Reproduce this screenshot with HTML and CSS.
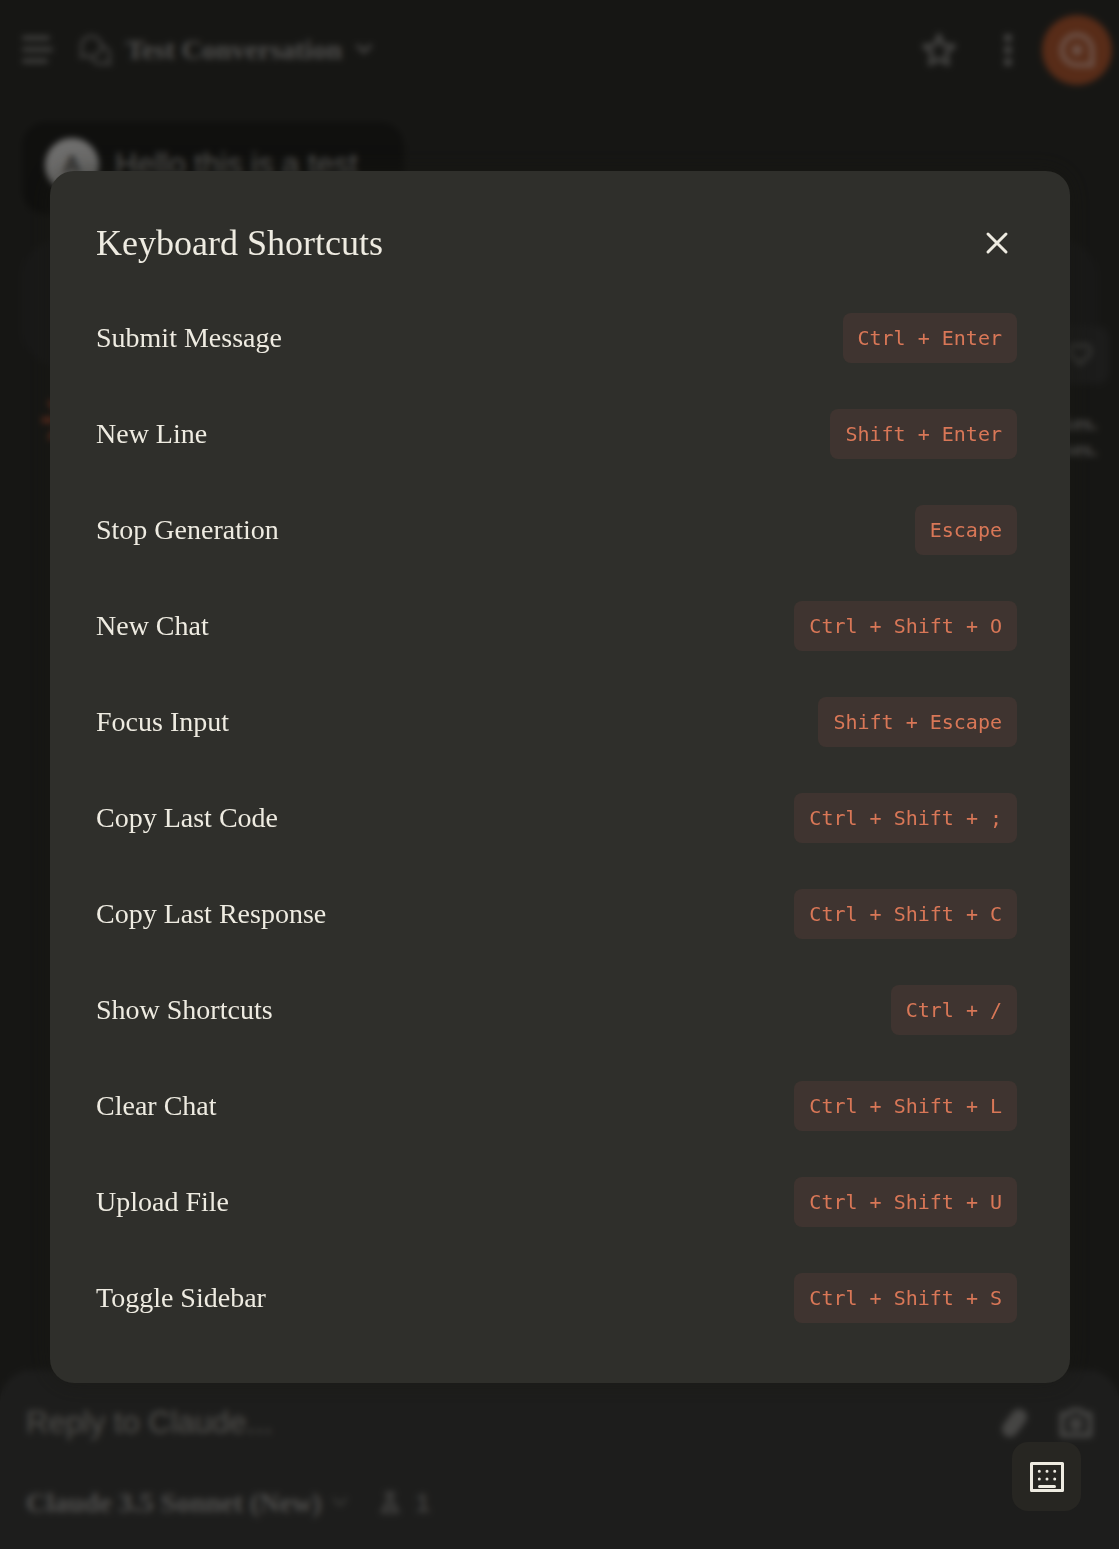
FILE: index.html
```html
<!DOCTYPE html>
<html lang="en">
<head>
<meta charset="utf-8">
<meta name="viewport" content="width=device-width, initial-scale=1">
<title>Test Conversation</title>
<link rel="stylesheet" href="styles.css">
</head>
<body>
<div class="app">
  <header class="topbar">
    <button class="icon-button" type="button" aria-label="Menu">
      <svg width="32" height="32" viewBox="0 0 32 32"><path d="M2 4h24M2 15.500h27M2 27h22" stroke-width="4"/></svg>
    </button>
    <button class="chat-title" type="button">
      <svg width="34" height="34" viewBox="0 0 34 34"><path d="M3 24l1-7a10 10 0 1 1 7 6zM23 13a9 9 0 0 1 8 12l1 6-6-1a10 10 0 0 1-12-4" stroke-width="3"/></svg>
      <span>Test Conversation</span>
      <svg width="16" height="12" viewBox="0 0 16 12"><path d="M2 2l6 6 6-6" stroke-width="4"/></svg>
    </button>
    <div class="topbar-actions">
      <button class="icon-button" type="button" aria-label="Star">
        <svg width="38" height="38" viewBox="0 0 38 38"><path d="M19 4l4 10 11 1-8 7 2 11-9-5-9 5 2-11-8-7 11-1z" stroke-width="4"/></svg>
      </button>
      <button class="icon-button" type="button" aria-label="More">
        <svg class="solid" width="12" height="36" viewBox="0 0 12 36"><circle cx="6" cy="6" r="4"/><circle cx="6" cy="18" r="4"/><circle cx="6" cy="30" r="4"/></svg>
      </button>
      <button class="brand-button" type="button" aria-label="Assistant">
        <svg width="40" height="40" viewBox="0 0 40 40"><path d="M35 35H20a15 15 0 1 1 15-15z" stroke-width="5"/><circle cx="20" cy="20" r="3" stroke-width="5"/></svg>
      </button>
    </div>
  </header>
  <main class="thread">
    <div class="message">
      <span class="avatar">A</span>
      <p>Hello this is a test</p>
    </div>
    <div class="reply">
      <button class="feedback" type="button" aria-label="Like">
        <svg width="24" height="24" viewBox="0 0 24 24"><path d="M12 21L3 12a6 6 0 0 1 9-8 6 6 0 0 1 9 8z" stroke-width="4"/></svg>
      </button>
    </div>
    <div class="thread-foot">
      <svg class="spark" width="52" height="52" viewBox="0 0 52 52"><path d="M26 2v48M2 26h48M9 9l34 34M43 9L9 43" stroke-width="6"/></svg>
      <p>mistakes.<br>responses.</p>
    </div>
  </main>
  <form class="composer">
    <div class="composer-row">
      <input class="prompt" type="text" placeholder="Reply to Claude..." aria-label="Reply to Claude">
      <button class="icon-button" type="button" aria-label="Attach file">
        <svg width="32" height="36" viewBox="0 0 32 36"><path d="M11 24L20 12" stroke-width="16"/></svg>
      </button>
      <button class="icon-button" type="button" aria-label="Take screenshot">
        <svg width="34" height="30" viewBox="0 0 34 30"><path d="M3 6h7l3-4h8l3 4h7v21H3z" stroke-width="5"/><circle cx="17" cy="16" r="4" stroke-width="5"/></svg>
      </button>
    </div>
    <div class="model-row">
      <button class="model" type="button">
        <span>Claude 3.5 Sonnet (New)</span>
        <svg width="16" height="12" viewBox="0 0 16 12"><path d="M2 2l6 6 6-6" stroke-width="3"/></svg>
      </button>
      <button class="style-chip" type="button">
        <svg width="20" height="24" viewBox="0 0 20 24"><path d="M6 2h8M8 2v8L2 21h16L12 10V2M5 16h10" stroke-width="3"/></svg>
        <span>1</span>
      </button>
    </div>
  </form>
</div>

<div class="overlay">
  <section class="modal" role="dialog" aria-modal="true" aria-labelledby="shortcuts-title">
    <header class="modal-head">
      <h2 id="shortcuts-title">Keyboard Shortcuts</h2>
      <button class="close" type="button" aria-label="Close">
        <svg width="24" height="24" viewBox="0 0 24 24"><path d="M3 3l18 18M21 3L3 21" stroke-width="3"/></svg>
      </button>
    </header>
    <dl class="shortcuts">
      <div class="shortcut"><dt>Submit Message</dt><dd><kbd>Ctrl + Enter</kbd></dd></div>
      <div class="shortcut"><dt>New Line</dt><dd><kbd>Shift + Enter</kbd></dd></div>
      <div class="shortcut"><dt>Stop Generation</dt><dd><kbd>Escape</kbd></dd></div>
      <div class="shortcut"><dt>New Chat</dt><dd><kbd>Ctrl + Shift + O</kbd></dd></div>
      <div class="shortcut"><dt>Focus Input</dt><dd><kbd>Shift + Escape</kbd></dd></div>
      <div class="shortcut"><dt>Copy Last Code</dt><dd><kbd>Ctrl + Shift + ;</kbd></dd></div>
      <div class="shortcut"><dt>Copy Last Response</dt><dd><kbd>Ctrl + Shift + C</kbd></dd></div>
      <div class="shortcut"><dt>Show Shortcuts</dt><dd><kbd>Ctrl + /</kbd></dd></div>
      <div class="shortcut"><dt>Clear Chat</dt><dd><kbd>Ctrl + Shift + L</kbd></dd></div>
      <div class="shortcut"><dt>Upload File</dt><dd><kbd>Ctrl + Shift + U</kbd></dd></div>
      <div class="shortcut"><dt>Toggle Sidebar</dt><dd><kbd>Ctrl + Shift + S</kbd></dd></div>
    </dl>
  </section>
</div>

<button class="keyboard-button" type="button" aria-label="Keyboard shortcuts">
  <svg width="34" height="30" viewBox="0 0 34 30">
    <rect x="1.500" y="1.500" width="31" height="27" stroke-width="3"/>
    <path d="M9.500 24.500h15" stroke-width="3"/>
    <path d="M9.300 9.300h.01M17 9.300h.01M24.700 9.300h.01M9.300 17h.01M17 17h.01M24.700 17h.01" stroke-width="3"/>
  </svg>
</button>
</body>
</html>
```

FILE: styles.css
```css
:root {
  --serif: Georgia, "Liberation Serif", serif;
  --sans: "Liberation Sans", sans-serif;
  --mono: Consolas, "DejaVu Sans Mono", monospace;
  --ivory: #eeebe1;
  --muted: #a09f9c;
}

* {
  box-sizing: border-box;
}

body {
  margin: 0;
  background: #2d2d29;
  color: var(--muted);
  font-family: var(--serif);
}

h2, p, dl, dd {
  margin: 0;
}

button {
  display: flex;
  align-items: center;
  padding: 0;
  border: 0;
  background: none;
  color: inherit;
  font: inherit;
}

svg {
  flex: none;
  fill: none;
  stroke: currentColor;
  stroke-linecap: round;
  stroke-linejoin: round;
}

svg.solid {
  fill: currentColor;
  stroke: none;
}

/* Conversation behind the dialog */

.app {
  display: flex;
  flex-direction: column;
  min-height: 100vh;
}

.topbar {
  display: flex;
  align-items: center;
  gap: 24px;
  height: 100px;
  padding: 0 7px 0 22px;
}

.topbar .icon-button {
  color: #8c8b88;
}

.chat-title {
  gap: 14px;
  font-size: 28px;
  font-weight: bold;
}

.chat-title svg {
  color: #7c7b78;
}

.topbar-actions {
  display: flex;
  align-items: center;
  gap: 44px;
  margin-left: auto;
}

.brand-button {
  justify-content: center;
  width: 70px;
  height: 70px;
  margin-left: -16px;
  border-radius: 50%;
  background: #b05830;
  color: #d8a490;
}

.thread {
  flex: 1;
  padding: 22px 22px 0;
}

.message {
  display: flex;
  align-items: center;
  gap: 16px;
  width: fit-content;
  height: 92px;
  padding: 0 46px 6px 23px;
  border-radius: 24px;
  background: #20201d;
  color: #b4b3b0;
  font: 31px var(--sans);
}

.avatar {
  display: grid;
  place-items: center;
  width: 54px;
  height: 54px;
  border-radius: 50%;
  background: #dddcda;
  color: #4c4b48;
  font-size: 24px;
  font-weight: bold;
}

.reply {
  display: flex;
  justify-content: flex-end;
  align-items: flex-end;
  height: 126px;
  margin-top: 26px;
  border-radius: 36px;
  background: #323230;
}

.feedback {
  padding: 17px;
  margin: 0 -12px -18px 0;
  border-radius: 12px;
  background: #383836;
  color: #6a6a66;
}

.thread-foot {
  display: flex;
  justify-content: space-between;
  align-items: flex-start;
  margin-top: 28px;
  padding-left: 20px;
  font-size: 22px;
  font-weight: bold;
  line-height: 26px;
  text-align: right;
}

.thread-foot p {
  padding-top: 16px;
}

.spark {
  color: #c0583a;
}

.composer {
  display: flex;
  flex-direction: column;
  gap: 34px;
  height: 179px;
  padding: 30px 26px 0;
  border-radius: 32px 32px 0 0;
  background: #3b3b39;
}

.composer-row, .model-row {
  display: flex;
  align-items: center;
  gap: 28px;
  height: 46px;
}

.composer-row {
  color: #8c8b88;
}

.prompt {
  flex: 1;
  min-width: 0;
  padding: 0;
  border: 0;
  background: none;
  font: 31px var(--sans);
}

.prompt::placeholder {
  color: #a3a19b;
}

.model {
  gap: 10px;
  font-size: 28px;
  font-weight: bold;
}

.model svg {
  color: #6a6a66;
}

.style-chip {
  gap: 16px;
  height: 46px;
  padding: 0 14px;
  margin-left: -10px;
  border-radius: 24px;
  color: #807f7c;
  font: bold 26px var(--sans);
}

/* Shortcuts dialog */

.overlay {
  position: fixed;
  inset: 0;
  display: flex;
  justify-content: center;
  align-items: center;
  padding: 5px 49px 0 50px;
  background: rgba(0, 0, 0, 0.5);
  backdrop-filter: blur(3px);
  overflow: auto;
}

.modal {
  width: 100%;
  padding: 46px 53px 60px 46px;
  border-radius: 24px;
  background: #2f2f2b;
  box-shadow: 0 0 24px rgba(24, 24, 18, 0.5);
  color: var(--ivory);
}

.modal-head {
  display: flex;
  justify-content: space-between;
  align-items: center;
  height: 52px;
  margin-bottom: 44px;
}

.modal-head h2 {
  font-size: 36px;
  font-weight: normal;
  line-height: 52px;
}

.close {
  padding: 8px;
}

.shortcuts {
  display: grid;
  gap: 46px;
}

.shortcut {
  display: flex;
  justify-content: space-between;
  align-items: center;
}

.shortcut dt {
  font-size: 28px;
  line-height: 50px;
}

.shortcut kbd {
  display: block;
  padding: 0 15px;
  border-radius: 8px;
  background: #3f3430;
  color: #d97757;
  font: 20px/50px var(--mono);
}

.keyboard-button {
  position: fixed;
  right: 38px;
  bottom: 38px;
  justify-content: center;
  width: 69px;
  height: 69px;
  border-radius: 16px;
  background: #272622;
  color: var(--ivory);
}
```
